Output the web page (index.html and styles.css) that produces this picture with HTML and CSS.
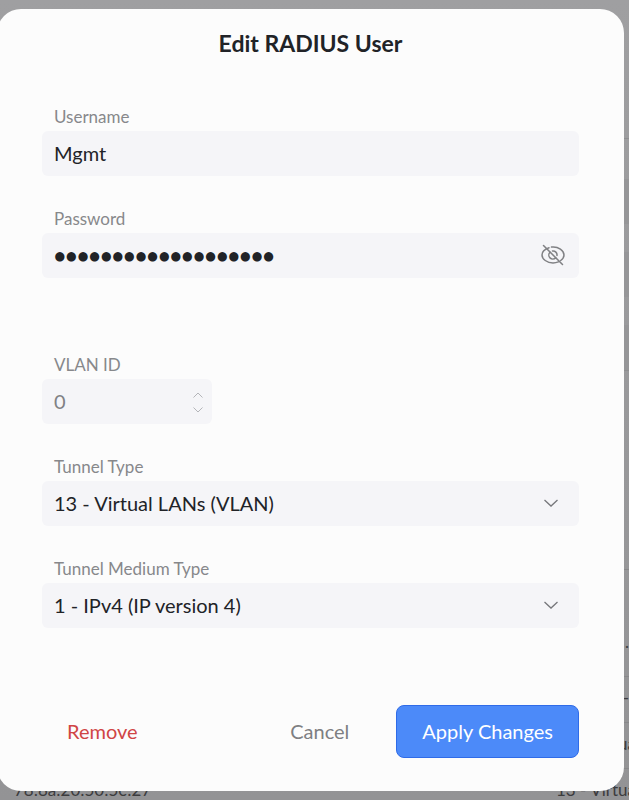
FILE: index.html
```html
<!DOCTYPE html>
<html lang="en">

<head>
  <meta charset="UTF-8">
  <meta name="viewport" content="width=device-width, initial-scale=1.0">
  <title>Edit RADIUS User</title>
  <link rel="stylesheet" href="styles.css">
</head>

<body>
  <!-- Page behind the dialog -->
  <main class="page">
    <div class="page-panel">
      <div class="page-row"></div>
      <div class="page-row"></div>
      <div class="page-row"></div>
    </div>
    <table class="users">
      <tbody>
        <tr class="users-head"><td></td><td class="end">.</td></tr>
        <tr><td></td><td class="end">-</td></tr>
        <tr><td></td><td>13 - Virtua</td></tr>
        <tr><td>78:8a:20:50:5e:27</td><td>13 - Virtua</td></tr>
      </tbody>
    </table>
  </main>

  <!-- Dialog -->
  <div class="overlay">
    <form class="modal" role="dialog" aria-labelledby="modalTitle">
      <h1 class="modal-title" id="modalTitle">Edit RADIUS User</h1>

      <div class="field">
        <label for="username">Username</label>
        <input class="control" type="text" id="username" value="Mgmt">
      </div>

      <div class="field field-password">
        <label for="password">Password</label>
        <div class="control-wrap">
          <input class="control" type="password" id="password" value="abcdefghijklmnopqrs">
          <button class="eye" type="button" aria-label="Show password">
            <svg width="24" height="24" viewBox="0 0 24 24" fill="none" stroke="currentColor" stroke-width="1.5" stroke-linecap="round">
              <path d="M8 4.700C3.800 6 1 9 1 12c0 4 5 8 11 8 2 0 3.800-.4 5.400-1.100" />
              <path d="M10.500 4.100C17.500 3.300 23 7.500 23 12c0 2-1.300 4-3.300 5.500" />
              <path d="M9 9.200a4 4 0 0 0 5.700 5.700" />
              <path d="M11.500 8a4 4 0 0 1 4.500 4.500" />
              <path d="M2.500 2.500l19 19" />
            </svg>
          </button>
        </div>
      </div>

      <div class="field field-short">
        <label for="vlan">VLAN ID</label>
        <div class="control-wrap">
          <input class="control" type="number" id="vlan" placeholder="0">
          <svg class="stepper" width="12" height="21" viewBox="0 0 12 21" fill="none" stroke="currentColor">
            <path d="M1.500 5.500L6 1l4.500 4.500" />
            <path d="M1.500 15.500L6 20l4.500-4.500" />
          </svg>
        </div>
      </div>

      <div class="field">
        <label for="tunnelType">Tunnel Type</label>
        <div class="control-wrap">
          <select class="control" id="tunnelType">
            <option>13 - Virtual LANs (VLAN)</option>
          </select>
          <svg class="chevron" width="16" height="10" viewBox="0 0 16 10" fill="none" stroke="currentColor" stroke-width="1.3">
            <path d="M1.500 2L8 8l6.500-6" />
          </svg>
        </div>
      </div>

      <div class="field">
        <label for="tunnelMedium">Tunnel Medium Type</label>
        <div class="control-wrap">
          <select class="control" id="tunnelMedium">
            <option>1 - IPv4 (IP version 4)</option>
          </select>
          <svg class="chevron" width="16" height="10" viewBox="0 0 16 10" fill="none" stroke="currentColor" stroke-width="1.3">
            <path d="M1.500 2L8 8l6.500-6" />
          </svg>
        </div>
      </div>

      <div class="actions">
        <button class="btn btn-remove" type="button">Remove</button>
        <button class="btn btn-cancel" type="button">Cancel</button>
        <button class="btn btn-apply" type="submit">Apply Changes</button>
      </div>
    </form>
  </div>
</body>

</html>
```

FILE: styles.css
```css
* {
  box-sizing: border-box;
}

body {
  margin: 0;
  height: 100vh;
  overflow: hidden;
  font-family: Lato, sans-serif;
  font-size: 20px;
  color: #212327;
  background: linear-gradient(#9f9fa1, #939395);
}

/* Page behind the dialog */
.page {
  padding-top: 138px;
}

.page-panel {
  display: flex;
  flex-direction: column;
  gap: 28px;
  padding-top: 40px;
  border-top: 1px solid #8e8e90;
  border-bottom: 1px solid #8e8e90;
}

.page-row {
  height: 45px;
  background: #969698;
}

.users {
  width: 100%;
  margin-top: 198px;
  border-collapse: collapse;
  table-layout: fixed;
  font-size: 17px;
  color: #3c3c3e;
}

.users td {
  height: 46px;
  padding: 0 0 4px 14px;
  border-top: 1px solid #88888a;
  white-space: nowrap;
}

.users td:first-child {
  width: 542px;
}

.users .end {
  text-align: right;
}

.users .users-head td {
  height: 107px;
  padding-top: 40px;
}

/* Dialog */
.overlay {
  position: fixed;
  inset: 0;
  padding: 9px 5px 9px 0;
}

.modal {
  min-height: 100%;
  margin-left: -3px;
  padding: 20px 45px 33px;
  display: flex;
  flex-direction: column;
  gap: 29px;
  border-radius: 24px;
  background: #fcfcfc;
}

.modal-title {
  margin: 0 0 17px;
  font-size: 23px;
  line-height: 28px;
  text-align: center;
}

.field {
  display: flex;
  flex-direction: column;
}

.field-password {
  margin-bottom: 44px;
}

.field-short {
  width: 170px;
}

.field label {
  padding: 0 12px;
  font-size: 17px;
  line-height: 28px;
  color: #87888b;
}

.control-wrap {
  position: relative;
}

.control {
  display: block;
  width: 100%;
  height: 45px;
  padding: 0 12px 2px;
  border: none;
  border-radius: 6px;
  background: #f5f5f8;
  font: inherit;
  color: inherit;
  appearance: none;
}

input[type="password"] {
  font-weight: 900;
}

input[type="number"] {
  appearance: textfield;
}

.control::placeholder {
  color: #808184;
}

.eye {
  position: absolute;
  top: 10px;
  right: 14px;
  display: flex;
  padding: 0;
  border: none;
  background: none;
  color: #808184;
  cursor: pointer;
}

.stepper {
  position: absolute;
  top: 13px;
  right: 8px;
  color: #b4b5b9;
}

.chevron {
  position: absolute;
  top: 17px;
  right: 20px;
  color: #76777b;
  pointer-events: none;
}

.actions {
  display: flex;
  align-items: center;
  margin-top: auto;
}

.btn {
  height: 53px;
  padding: 0 24px 2px;
  border: 1px solid transparent;
  border-radius: 8px;
  background: none;
  font: inherit;
  cursor: pointer;
}

.btn-remove {
  color: #d04545;
}

.btn-cancel {
  margin-left: auto;
  margin-right: 22px;
  color: #7e7f82;
}

.btn-apply {
  padding: 0 25px 2px;
  border-color: #2f6be8;
  background: #4c8af9;
  color: #fff;
}
```
